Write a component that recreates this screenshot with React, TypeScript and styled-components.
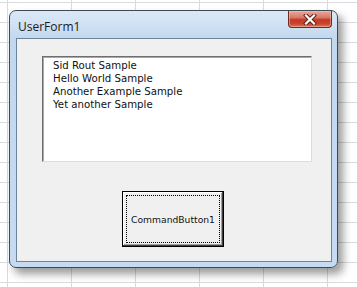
import React from "react";
import styled, { createGlobalStyle } from "styled-components";

const Global = createGlobalStyle`
  html, body { margin: 0; padding: 0; }
  body { width: 357px; height: 287px; overflow: hidden; background: #ffffff; }
`;

const Desktop = styled.div`
  width: 357px;
  height: 287px;
  box-sizing: border-box;
  padding: 10px 0 0 9px;
  background-color: #ffffff;
  background-image:
    linear-gradient(to right, #d8dce0 1px, transparent 1px),
    linear-gradient(to bottom, #d8dce0 1px, transparent 1px);
  background-size: 64px 20px;
  background-position: 7px 2px;
`;

const Window = styled.div`
  width: 329px;
  height: 258px;
  box-sizing: border-box;
  border: 1px solid #3c4a58;
  border-radius: 7px;
  background: linear-gradient(to bottom, #dae8f6 0px, #cfe1f3 14px, #c2d8ef 28px, #c6dbf1 100%);
  box-shadow: 5px 6px 9px rgba(0, 0, 0, 0.4);
  display: flex;
  flex-direction: column;
  padding: 0 5px 5px 6px;
`;

const TitleBar = styled.div`
  height: 27px;
  display: flex;
  align-items: center;
  justify-content: space-between;
`;

const Title = styled.span`
  font-family: "Segoe UI", "Open Sans", "Noto Sans", sans-serif;
  font-size: 12px;
  color: #1a1a1a;
  padding-left: 2px;
  margin-top: 3px;
`;

const CloseButton = styled.div`
  align-self: flex-start;
  width: 44px;
  height: 17px;
  box-sizing: border-box;
  border: 1px solid #6e2b22;
  border-top: none;
  border-radius: 0 0 4px 4px;
  background: linear-gradient(to bottom, #e9a899 0%, #d97a67 40%, #c43a24 55%, #c9452e 80%, #dd7a5f 100%);
  display: flex;
  align-items: center;
  justify-content: center;
  box-shadow: inset 0 0 0 1px rgba(255, 200, 190, 0.45);
`;

const Client = styled.div`
  flex: 1;
  box-sizing: border-box;
  border: 1px solid #6d839a;
  background: #f0f0f0;
  display: flex;
  flex-direction: column;
  align-items: flex-start;
  padding: 17px 0 0 25px;
`;

const ListBox = styled.div`
  width: 270px;
  height: 106px;
  box-sizing: border-box;
  background: #ffffff;
  border-top: 1px solid #6e6e6e;
  border-left: 1px solid #6e6e6e;
  border-right: 1px solid #dcdcdc;
  border-bottom: 1px solid #dcdcdc;
  box-shadow: inset 1px 1px 0 #a8a8a8;
  padding: 2px 0 0 10px;
  display: flex;
  flex-direction: column;
`;

const ListItem = styled.div`
  font-family: "DejaVu Sans", Tahoma, sans-serif;
  font-size: 10.2px;
  line-height: 13px;
  height: 13px;
  color: #111111;
  white-space: nowrap;
`;

const CommandButton = styled.div`
  margin: 29px 0 0 80px;
  width: 102px;
  height: 56px;
  box-sizing: border-box;
  border: 1px solid #000000;
  background: #f0f0f0;
  box-shadow: inset -1px -1px 0 #404040, inset 1px 1px 0 #ffffff, inset -2px -2px 0 #a0a0a0;
  padding: 3px;
  display: flex;
`;

const FocusRect = styled.div`
  flex: 1;
  border: 1px dotted #000000;
  display: flex;
  align-items: center;
  justify-content: center;
  font-family: "DejaVu Sans", Tahoma, sans-serif;
  font-size: 9.2px;
  color: #111111;
  padding-top: 1px;
`;

const items = ["Sid Rout Sample", "Hello World Sample", "Another Example Sample", "Yet another Sample"];

export default function App() {
  return (
    <>
      <Global />
      <Desktop>
        <Window>
          <TitleBar>
            <Title>UserForm1</Title>
            <CloseButton>
              <svg width="14" height="11" viewBox="0 0 14 11">
                <path d="M3 1.5 L11 9.5 M11 1.5 L3 9.5" stroke="#5a1a12" strokeWidth="4" strokeLinecap="square" />
                <path d="M3 1.5 L11 9.5 M11 1.5 L3 9.5" stroke="#ffffff" strokeWidth="2.2" strokeLinecap="square" />
              </svg>
            </CloseButton>
          </TitleBar>
          <Client>
            <ListBox>
              {items.map((t) => (
                <ListItem key={t}>{t}</ListItem>
              ))}
            </ListBox>
            <CommandButton>
              <FocusRect>CommandButton1</FocusRect>
            </CommandButton>
          </Client>
        </Window>
      </Desktop>
    </>
  );
}
